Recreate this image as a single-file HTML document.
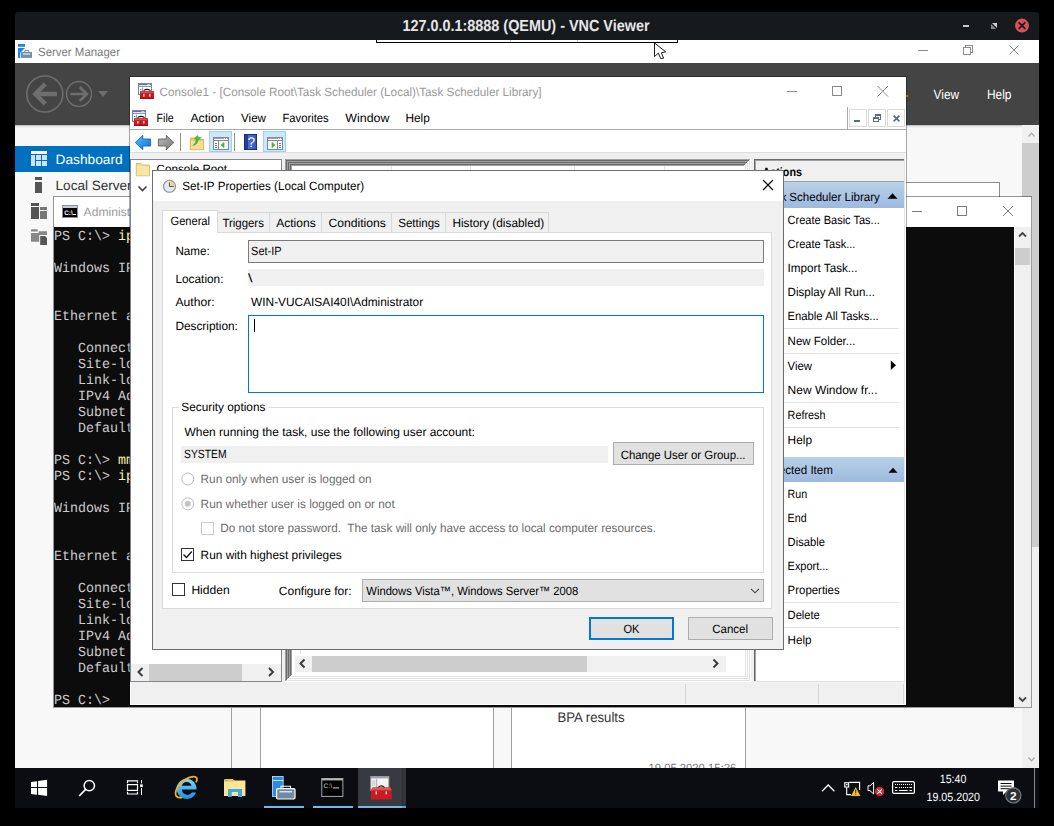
<!DOCTYPE html>
<html><head><meta charset="utf-8"><title>VNC</title>
<style>
html,body{margin:0;padding:0;background:#000;overflow:hidden}
svg{display:block;font-family:"Liberation Sans",sans-serif}
text{white-space:pre}
</style></head><body>
<svg width="1054" height="826" viewBox="0 0 1054 826" shape-rendering="crispEdges" text-rendering="geometricPrecision">
<defs>
<linearGradient id="hdr" x1="0" y1="0" x2="0" y2="1"><stop offset="0" stop-color="#b9d1ea"/><stop offset="1" stop-color="#9db9dc"/></linearGradient>
<linearGradient id="bluearrow" x1="0" y1="0" x2="1" y2="1"><stop offset="0" stop-color="#5cc0ff"/><stop offset="1" stop-color="#0a6fd0"/></linearGradient>
<linearGradient id="grayarrow" x1="0" y1="0" x2="1" y2="1"><stop offset="0" stop-color="#b8b8b8"/><stop offset="1" stop-color="#7c7c7c"/></linearGradient>
<linearGradient id="helpg" x1="0" y1="0" x2="1" y2="0"><stop offset="0" stop-color="#1f3f9a"/><stop offset="0.25" stop-color="#4f72d6"/><stop offset="1" stop-color="#3457b8"/></linearGradient>
<linearGradient id="ieg" x1="0" y1="0" x2="0" y2="1"><stop offset="0" stop-color="#7fd6ff"/><stop offset="1" stop-color="#1b8fe0"/></linearGradient>
<clipPath id="desk"><rect x="15" y="40" width="1024" height="768"/></clipPath>
</defs>
<rect x="0" y="0" width="1054" height="826" fill="#000" />
<path d="M15 40 V15 Q15 12 18 12 H1036 Q1039 12 1039 15 V40 Z" fill="#161a1d" shape-rendering="geometricPrecision"/>
<text x="402.5" y="31" font-size="16" fill="#e6e6e6" font-weight="bold" textLength="247" lengthAdjust="spacingAndGlyphs" >127.0.0.1:8888 (QEMU) - VNC Viewer</text>
<rect x="963" y="25" width="6" height="2" fill="#c9c9c9" />
<path d="M992 23 H997 V28 Z" fill="#d0d0d0" shape-rendering="geometricPrecision"/>
<path d="M991 24 V29 H996 Z" fill="#8a8a8a" shape-rendering="geometricPrecision"/>
<circle cx="1022" cy="25.6" r="7" fill="#d8505a" shape-rendering="geometricPrecision"/>
<path d="M1019.2 22.8 L1024.8 28.4 M1024.8 22.8 L1019.2 28.4" fill="none" stroke="#1b1b1b" stroke-width="1.9" shape-rendering="geometricPrecision" stroke-linecap="round"/>
<g clip-path="url(#desk)">
<rect x="15" y="40" width="1024" height="23" fill="#fff" />
<rect x="15" y="63" width="1024" height="62" fill="#444" />
<rect x="15" y="125" width="1024" height="643" fill="#f8f8f8" />
<rect x="15" y="125" width="1024" height="1" fill="#c4c4c4"/>
<rect x="15" y="126" width="1024" height="1" fill="#e6e6e6"/>
<rect x="15" y="127" width="1024" height="1" fill="#f2f2f2"/>
<rect x="376.5" y="39.5" width="301" height="3" fill="#fff" stroke="#000" stroke-width="1" />
<rect x="376" y="39" width="302" height="1" fill="#161a1d" />
<rect x="510" y="40" width="1" height="2" fill="#ccc"/>
<rect x="577" y="40" width="1" height="2" fill="#ccc"/>
<g shape-rendering="geometricPrecision">
<rect x="18" y="44" width="7" height="2.8" fill="#1e86e0" />
<path d="M18 48 H25 L20.3 52.8 V58 H18 Z" fill="#1e86e0" />
<rect x="21" y="52" width="11" height="5.9" fill="#6e8fae" />
<path d="M24.8 52 V50.6 H28.8 V52" fill="none" stroke="#6e8fae" stroke-width="1" />
<path d="M22.3 53.4 H30.6 L29.8 54.6 H23.1 Z" fill="#fff" />
</g>
<text x="38" y="55.6" font-size="12" fill="#7a7a7a" textLength="82" lengthAdjust="spacingAndGlyphs" >Server Manager</text>
<rect x="918" y="50" width="10" height="1" fill="#8c8c8c"/>
<rect x="963.5" y="47.5" width="7" height="7" fill="none" stroke="#8c8c8c" stroke-width="1" />
<path d="M965.5 47 V45.5 H972.5 V52.5 H971" fill="none" stroke="#8c8c8c" stroke-width="1" />
<path d="M1009.5 45.5 L1018.5 54.5 M1018.5 45.5 L1009.5 54.5" fill="none" stroke="#8c8c8c" stroke-width="1" shape-rendering="geometricPrecision"/>
<g shape-rendering="geometricPrecision" fill="none" stroke="#6e6e6e">
<circle cx="44.8" cy="94" r="18" stroke-width="1.6"/>
<circle cx="79" cy="94" r="12.5" stroke-width="1.4"/>
<path d="M57 94 H36 M45.3 84 L35.3 94 L45.3 104" fill="none" stroke="#6e6e6e" stroke-width="4.4" />
<path d="M70.5 94 H86 M79.8 87 L86.8 94 L79.8 101" fill="none" stroke="#6e6e6e" stroke-width="2.7" />
</g>
<path d="M98 91 H108 L103 97 Z" fill="#6e6e6e" shape-rendering="geometricPrecision"/>
<text x="933.6" y="98.6" font-size="13.5" fill="#fff" textLength="25.5" lengthAdjust="spacingAndGlyphs" >View</text>
<text x="987" y="98.6" font-size="13.5" fill="#fff" textLength="24.5" lengthAdjust="spacingAndGlyphs" >Help</text>
<rect x="906" y="95" width="2" height="2" fill="#e8701a" />
<rect x="15" y="146" width="200" height="26" fill="#0071c1" />
<rect x="31" y="151" width="16" height="3" fill="#fff" />
<rect x="31" y="155" width="4" height="11" fill="#cfe4f4" />
<rect x="36" y="155" width="5" height="5" fill="#cfe4f4" />
<rect x="42" y="155" width="5" height="5" fill="#cfe4f4" />
<rect x="36" y="161" width="5" height="5" fill="#cfe4f4" />
<rect x="42" y="161" width="5" height="5" fill="#cfe4f4" />
<text x="55.6" y="164.3" font-size="13.5" fill="#fff" textLength="67" lengthAdjust="spacingAndGlyphs" >Dashboard</text>
<rect x="35" y="177" width="7" height="3" fill="#555" />
<rect x="35" y="182" width="7" height="11" fill="#555" />
<text x="55.6" y="190.3" font-size="13.5" fill="#333" textLength="76" lengthAdjust="spacingAndGlyphs" >Local Server</text>
<rect x="31" y="203" width="8" height="3" fill="#555" />
<rect x="31" y="207" width="8" height="12" fill="#555" />
<rect x="40" y="207" width="7" height="3" fill="#777" />
<rect x="40" y="211" width="7" height="8" fill="#777" />
<g shape-rendering="geometricPrecision">
<path d="M31 230.2 Q31 229.3 32 229.3 H36.8 Q37.7 229.3 37.7 230.2 V231.6 H31 Z" fill="#888" />
<path d="M31 233 H38.7 V231.3 H47 V241.8 H31 Z" fill="#888" />
<rect x="39.2" y="235" width="8.8" height="10.9" fill="#f8f8f8" />
<path d="M40.2 236 H45 L47 238 V244.9 H40.2 Z" fill="#555" />
</g>
<rect x="231" y="300" width="1" height="480" fill="#a0a0a0"/>
<rect x="260.5" y="300.5" width="233" height="479" fill="#fff" stroke="#a0a0a0" stroke-width="1" />
<rect x="511.5" y="300.5" width="234" height="479" fill="#fff" stroke="#a0a0a0" stroke-width="1" />
<rect x="600.5" y="182.5" width="399" height="299" fill="#fff" stroke="#8c8c8c" stroke-width="1" />
<text x="557.4" y="722" font-size="14" fill="#333" textLength="67.2" lengthAdjust="spacingAndGlyphs" >BPA results</text>
<text x="648.5" y="771.5" font-size="12" fill="#777" textLength="87.7" lengthAdjust="spacingAndGlyphs" >19.05.2020 15:26</text>
<rect x="1022" y="125" width="17" height="643" fill="#f0f0f0" />
<rect x="1022" y="143" width="17" height="404" fill="#cdcdcd" />
<path d="M1028.5 136.5 L1031.5 133.2 L1034.5 136.5" fill="none" stroke="#a8a8a8" stroke-width="1.2" shape-rendering="geometricPrecision"/>
<path d="M1028.5 757.5 L1031.5 760.8 L1034.5 757.5" fill="none" stroke="#a8a8a8" stroke-width="1.2" shape-rendering="geometricPrecision"/>
<rect x="53.5" y="196.5" width="978" height="511" fill="#fff" stroke="rgba(0,0,0,0.4)" stroke-width="1" />
<rect x="54" y="227" width="960" height="480" fill="#0c0c0c" />
<rect x="1015" y="227" width="16" height="480" fill="#f0f0f0" />
<rect x="1015" y="248" width="15" height="17" fill="#cdcdcd" />
<path d="M1019 236.5 L1022.5 233 L1026 236.5" fill="none" stroke="#444" stroke-width="1.8" shape-rendering="geometricPrecision"/>
<path d="M1019 697.5 L1022.5 701 L1026 697.5" fill="none" stroke="#444" stroke-width="1.8" shape-rendering="geometricPrecision"/>
<rect x="62.5" y="205.5" width="15" height="12" fill="#000" stroke="#8a8fa0" stroke-width="1" />
<rect x="63" y="206" width="14" height="2" fill="#c5ccd8" />
<text x="64.2" y="215.2" font-size="6.5" fill="#fff" font-weight="bold" textLength="8.6" lengthAdjust="spacingAndGlyphs" >C:\</text>
<rect x="73.4" y="214.3" width="2.4" height="1" fill="#fff" />
<text x="83.6" y="216" font-size="12" fill="#9a9a9a" textLength="46.6" lengthAdjust="spacingAndGlyphs" >Administ</text>
<rect x="912" y="211" width="10" height="1" fill="#7a7a7a"/>
<rect x="957.5" y="206.5" width="9" height="9" fill="none" stroke="#7a7a7a" stroke-width="1" />
<path d="M1003 206 L1013 216 M1013 206 L1003 216" fill="none" stroke="#7a7a7a" stroke-width="1" shape-rendering="geometricPrecision"/>
<text x="54" y="240" font-size="14" fill="#cccccc" font-family="Liberation Mono" textLength="64" lengthAdjust="spacingAndGlyphs" >PS C:\&gt; </text>
<text x="118" y="240" font-size="14" fill="#f9f1a5" font-family="Liberation Mono" textLength="64" lengthAdjust="spacingAndGlyphs" >ipconfig</text>
<text x="54" y="272" font-size="14" fill="#cccccc" font-family="Liberation Mono" textLength="192" lengthAdjust="spacingAndGlyphs" >Windows IP Configuration</text>
<text x="54" y="320" font-size="14" fill="#cccccc" font-family="Liberation Mono" textLength="208" lengthAdjust="spacingAndGlyphs" >Ethernet adapter Ethernet:</text>
<text x="54" y="352" font-size="14" fill="#cccccc" font-family="Liberation Mono" textLength="304" lengthAdjust="spacingAndGlyphs" >   Connection-specific DNS Suffix  . :</text>
<text x="54" y="368" font-size="14" fill="#cccccc" font-family="Liberation Mono" textLength="304" lengthAdjust="spacingAndGlyphs" >   Site-local IPv6 Address . . . . . :</text>
<text x="54" y="384" font-size="14" fill="#cccccc" font-family="Liberation Mono" textLength="304" lengthAdjust="spacingAndGlyphs" >   Link-local IPv6 Address . . . . . :</text>
<text x="54" y="400" font-size="14" fill="#cccccc" font-family="Liberation Mono" textLength="304" lengthAdjust="spacingAndGlyphs" >   IPv4 Address. . . . . . . . . . . :</text>
<text x="54" y="416" font-size="14" fill="#cccccc" font-family="Liberation Mono" textLength="304" lengthAdjust="spacingAndGlyphs" >   Subnet Mask . . . . . . . . . . . :</text>
<text x="54" y="432" font-size="14" fill="#cccccc" font-family="Liberation Mono" textLength="304" lengthAdjust="spacingAndGlyphs" >   Default Gateway . . . . . . . . . :</text>
<text x="54" y="464" font-size="14" fill="#cccccc" font-family="Liberation Mono" textLength="64" lengthAdjust="spacingAndGlyphs" >PS C:\&gt; </text>
<text x="118" y="464" font-size="14" fill="#f9f1a5" font-family="Liberation Mono" textLength="24" lengthAdjust="spacingAndGlyphs" >mmc</text>
<text x="54" y="480" font-size="14" fill="#cccccc" font-family="Liberation Mono" textLength="64" lengthAdjust="spacingAndGlyphs" >PS C:\&gt; </text>
<text x="118" y="480" font-size="14" fill="#f9f1a5" font-family="Liberation Mono" textLength="64" lengthAdjust="spacingAndGlyphs" >ipconfig</text>
<text x="54" y="512" font-size="14" fill="#cccccc" font-family="Liberation Mono" textLength="192" lengthAdjust="spacingAndGlyphs" >Windows IP Configuration</text>
<text x="54" y="560" font-size="14" fill="#cccccc" font-family="Liberation Mono" textLength="208" lengthAdjust="spacingAndGlyphs" >Ethernet adapter Ethernet:</text>
<text x="54" y="592" font-size="14" fill="#cccccc" font-family="Liberation Mono" textLength="304" lengthAdjust="spacingAndGlyphs" >   Connection-specific DNS Suffix  . :</text>
<text x="54" y="608" font-size="14" fill="#cccccc" font-family="Liberation Mono" textLength="304" lengthAdjust="spacingAndGlyphs" >   Site-local IPv6 Address . . . . . :</text>
<text x="54" y="624" font-size="14" fill="#cccccc" font-family="Liberation Mono" textLength="304" lengthAdjust="spacingAndGlyphs" >   Link-local IPv6 Address . . . . . :</text>
<text x="54" y="640" font-size="14" fill="#cccccc" font-family="Liberation Mono" textLength="304" lengthAdjust="spacingAndGlyphs" >   IPv4 Address. . . . . . . . . . . :</text>
<text x="54" y="656" font-size="14" fill="#cccccc" font-family="Liberation Mono" textLength="304" lengthAdjust="spacingAndGlyphs" >   Subnet Mask . . . . . . . . . . . :</text>
<text x="54" y="672" font-size="14" fill="#cccccc" font-family="Liberation Mono" textLength="304" lengthAdjust="spacingAndGlyphs" >   Default Gateway . . . . . . . . . :</text>
<text x="54" y="704" font-size="14" fill="#cccccc" font-family="Liberation Mono" textLength="56" lengthAdjust="spacingAndGlyphs" >PS C:\&gt;</text>
<rect x="129.5" y="76.5" width="777" height="629" fill="none" stroke="rgba(0,0,0,0.33)" stroke-width="1" />
<rect x="130" y="77" width="776" height="628" fill="#fff" />
<rect x="131" y="153" width="774" height="551" fill="#f0f0f0" />
<rect x="130" y="77" width="776" height="53" fill="#fff" />
<rect x="130" y="130" width="776" height="22" fill="#fff" />
<g transform="translate(138,83)"><g shape-rendering="geometricPrecision"><rect x="0.5" y="0.5" width="13" height="11" fill="#fff" stroke="#7e879c"/><rect x="1" y="1" width="12" height="1.2" fill="#67749a"/><rect x="9.6" y="1" width="1" height="1.2" fill="#fff"/><rect x="11.4" y="1" width="0.6" height="1.2" fill="#fff"/><rect x="1" y="3" width="12" height="1" fill="#8e98b4"/><rect x="4.2" y="4.5" width="0.9" height="6.5" fill="#7e879c"/><rect x="2" y="6" width="1.4" height="1" fill="#777"/><path d="M5.6 7.6 Q9 5.2 12.6 7.6" fill="none" stroke="#111" stroke-width="1.1"/><rect x="2" y="8" width="14" height="8" rx="0.8" fill="#c8181e"/><rect x="2.6" y="8.3" width="12.8" height="2" fill="#d94a4a"/><rect x="2" y="14.8" width="14" height="1.2" fill="#a80d12"/><rect x="5" y="11" width="1.6" height="2.6" fill="#b9d6d8"/><rect x="11" y="11" width="1.6" height="2.6" fill="#b9d6d8"/></g></g>
<text x="159.6" y="96.2" font-size="12" fill="#999" textLength="382" lengthAdjust="spacingAndGlyphs" >Console1 - [Console Root\Task Scheduler (Local)\Task Scheduler Library]</text>
<rect x="787" y="91" width="10" height="1" fill="#8a8a8a"/>
<rect x="832.5" y="86.5" width="9" height="9" fill="none" stroke="#8a8a8a" stroke-width="1" />
<path d="M877.5 86 L888 96.5 M888 86 L877.5 96.5" fill="none" stroke="#8a8a8a" stroke-width="1" shape-rendering="geometricPrecision"/>
<g transform="translate(132,110)"><g shape-rendering="geometricPrecision"><rect x="0.5" y="0.5" width="13" height="11" fill="#fff" stroke="#7e879c"/><rect x="1" y="1" width="12" height="1.2" fill="#67749a"/><rect x="9.6" y="1" width="1" height="1.2" fill="#fff"/><rect x="11.4" y="1" width="0.6" height="1.2" fill="#fff"/><rect x="1" y="3" width="12" height="1" fill="#8e98b4"/><rect x="4.2" y="4.5" width="0.9" height="6.5" fill="#7e879c"/><rect x="2" y="6" width="1.4" height="1" fill="#777"/><path d="M5.6 7.6 Q9 5.2 12.6 7.6" fill="none" stroke="#111" stroke-width="1.1"/><rect x="2" y="8" width="14" height="8" rx="0.8" fill="#c8181e"/><rect x="2.6" y="8.3" width="12.8" height="2" fill="#d94a4a"/><rect x="2" y="14.8" width="14" height="1.2" fill="#a80d12"/><rect x="5" y="11" width="1.6" height="2.6" fill="#b9d6d8"/><rect x="11" y="11" width="1.6" height="2.6" fill="#b9d6d8"/></g></g>
<text x="156.6" y="122" font-size="12" fill="#000" textLength="17.2" lengthAdjust="spacingAndGlyphs" >File</text>
<text x="190.4" y="122" font-size="12" fill="#000" textLength="34" lengthAdjust="spacingAndGlyphs" >Action</text>
<text x="241" y="122" font-size="12" fill="#000" textLength="25" lengthAdjust="spacingAndGlyphs" >View</text>
<text x="282.4" y="122" font-size="12" fill="#000" textLength="46.3" lengthAdjust="spacingAndGlyphs" >Favorites</text>
<text x="345.3" y="122" font-size="12" fill="#000" textLength="44.1" lengthAdjust="spacingAndGlyphs" >Window</text>
<text x="405.4" y="122" font-size="12" fill="#000" textLength="24.4" lengthAdjust="spacingAndGlyphs" >Help</text>
<rect x="130" y="129" width="776" height="1" fill="#a9a9a9"/>
<rect x="847" y="107" width="1" height="23" fill="#a9a9a9"/>
<rect x="849.5" y="109.5" width="17" height="17" fill="#fff" stroke="#dadada" stroke-width="1" />
<rect x="868.5" y="109.5" width="17" height="17" fill="#fff" stroke="#dadada" stroke-width="1" />
<rect x="887.5" y="109.5" width="17" height="17" fill="#fff" stroke="#dadada" stroke-width="1" />
<rect x="854" y="120" width="6" height="2" fill="#5b6c82" />
<rect x="873.5" y="117.5" width="5" height="4" fill="none" stroke="#5b6c82" stroke-width="1" />
<rect x="873" y="118" width="6" height="1" fill="#5b6c82"/>
<path d="M875.5 117 V114.5 H880.5 V119.5 H879" fill="none" stroke="#5b6c82" stroke-width="1" />
<rect x="875" y="115" width="6" height="1" fill="#5b6c82"/>
<path d="M893.6 115.6 L899.4 121.4 M899.4 115.6 L893.6 121.4" fill="none" stroke="#5b6c82" stroke-width="1.7" shape-rendering="geometricPrecision"/>
<rect x="130" y="152" width="776" height="1" fill="#dcdcdc"/>
<g shape-rendering="geometricPrecision">
<path d="M135.3 142.5 L142.8 135.4 V139 H150.6 V146 H142.8 V149.7 Z" fill="url(#bluearrow)" stroke="#1565b5" stroke-width="0.9" stroke-linejoin="round"/>
<path d="M173.8 142.5 L166.3 135.4 V139 H158.4 V146 H166.3 V149.7 Z" fill="url(#grayarrow)" stroke="#5e5e5e" stroke-width="0.9" stroke-linejoin="round"/>
</g>
<rect x="180" y="133" width="1" height="18" fill="#8e8e8e"/>
<g shape-rendering="geometricPrecision">
<path d="M190.3 138 H195 L196.5 139.5 H203.7 V149.7 H190.3 Z" fill="#eccb74" stroke="#c9a74e" stroke-width="0.8" />
<rect x="190.8" y="141" width="12.4" height="8.3" fill="#f5dc98" />
<path d="M193 145.5 Q196 143 196.5 139 L194.3 139 L197.3 135.4 L200.3 139 L198.3 139 Q198 144.5 193 145.5 Z" fill="#4cc23a" stroke="#2f9a25" stroke-width="0.5" />
<rect x="199" y="137.3" width="2.5" height="1" fill="#4a90e2" />
</g>
<rect x="209.5" y="131.5" width="22" height="20" fill="#cce8ff" stroke="#99d1ff" stroke-width="1" />
<g transform="translate(213,137)"><g shape-rendering="crispEdges"><rect x="0.5" y="0.5" width="15" height="12" fill="#fff" stroke="#888"/><rect x="1" y="1" width="14" height="1" fill="#9aa0ad"/><rect x="11" y="1" width="1" height="1" fill="#fff"/><rect x="13" y="1" width="1" height="1" fill="#fff"/><rect x="1" y="3" width="14" height="1" fill="#888"/><rect x="5" y="4" width="1" height="8" fill="#888"/><rect x="2" y="5.5" width="2" height="1" fill="#3f86d6"/><rect x="2" y="7.5" width="2" height="1" fill="#3f86d6"/><rect x="2" y="9.5" width="2" height="1" fill="#3f86d6"/><rect x="6" y="4" width="9" height="8" fill="#f4f4f4"/><path d="M11 5.5 L8 8 L11 10.5 Z" fill="#4cc23a" stroke="#2f9a25" stroke-width="0.5" shape-rendering="geometricPrecision"/></g></g>
<rect x="234" y="133" width="1" height="18" fill="#8e8e8e"/>
<rect x="244.5" y="134.5" width="12" height="15" fill="url(#helpg)" stroke="#1a2f7a" stroke-width="1" />
<rect x="245" y="135" width="3" height="14" fill="#1f3f9a" />
<text x="247.6" y="147.4" font-size="14" fill="#fff" textLength="7.6" lengthAdjust="spacingAndGlyphs" >?</text>
<rect x="263.5" y="131.5" width="22" height="20" fill="#cce8ff" stroke="#99d1ff" stroke-width="1" />
<g transform="translate(267,137)"><g shape-rendering="crispEdges"><rect x="0.5" y="0.5" width="15" height="12" fill="#fff" stroke="#888"/><rect x="1" y="1" width="14" height="1" fill="#9aa0ad"/><rect x="11" y="1" width="1" height="1" fill="#fff"/><rect x="13" y="1" width="1" height="1" fill="#fff"/><rect x="1" y="3" width="14" height="1" fill="#888"/><rect x="10" y="4" width="1" height="8" fill="#888"/><rect x="12" y="5.5" width="2" height="1" fill="#3f86d6"/><rect x="12" y="7.5" width="2" height="1" fill="#3f86d6"/><rect x="12" y="9.5" width="2" height="1" fill="#3f86d6"/><rect x="1" y="4" width="9" height="8" fill="#f4f4f4"/><path d="M5 5.5 L8 8 L5 10.5 Z" fill="#4cc23a" stroke="#2f9a25" stroke-width="0.5" shape-rendering="geometricPrecision"/></g></g>
<rect x="130.5" y="159.5" width="151" height="522" fill="#fff" stroke="#828790" stroke-width="1" />
<g shape-rendering="geometricPrecision">
<path d="M136.3 163.5 H141 L142.5 165 H149.5 V175.8 H136.3 Z" fill="#f3d98c" stroke="#d1b25a" stroke-width="0.8" />
<rect x="136.8" y="166.2" width="12.2" height="9.2" fill="#f8e5a8" />
</g>
<text x="156.6" y="172.8" font-size="12" fill="#000" textLength="70.3" lengthAdjust="spacingAndGlyphs" >Console Root</text>
<path d="M138.5 186.5 L142.5 190.5 L146.5 186.5" fill="none" stroke="#404040" stroke-width="1.6" shape-rendering="geometricPrecision"/>
<rect x="131" y="664" width="150" height="17" fill="#f0f0f0" />
<rect x="149" y="664" width="93" height="17" fill="#cdcdcd" />
<path d="M142.5 668 L138.5 672 L142.5 676" fill="none" stroke="#3c3c3c" stroke-width="2" shape-rendering="geometricPrecision"/>
<path d="M269 668 L273 672 L269 676" fill="none" stroke="#3c3c3c" stroke-width="2" shape-rendering="geometricPrecision"/>
<rect x="285" y="159" width="466" height="523" fill="#fff" />
<rect x="285" y="159" width="466" height="1" fill="#a0a0a0"/>
<rect x="285" y="159" width="1" height="523" fill="#a0a0a0"/>
<rect x="285" y="681" width="466" height="1" fill="#fff"/>
<rect x="750" y="159" width="1" height="523" fill="#fff"/>
<rect x="286" y="160" width="464" height="1" fill="#696969"/>
<rect x="286" y="160" width="1" height="521" fill="#696969"/>
<rect x="286" y="680" width="464" height="1" fill="#e3e3e3"/>
<rect x="749" y="160" width="1" height="521" fill="#e3e3e3"/>
<rect x="287" y="161" width="462" height="1" fill="#a0a0a0"/>
<rect x="287" y="161" width="1" height="519" fill="#a0a0a0"/>
<rect x="287" y="679" width="462" height="1" fill="#fff"/>
<rect x="748" y="161" width="1" height="519" fill="#fff"/>
<rect x="288" y="162" width="460" height="1" fill="#696969"/>
<rect x="288" y="162" width="1" height="517" fill="#696969"/>
<rect x="288" y="678" width="460" height="1" fill="#e3e3e3"/>
<rect x="747" y="162" width="1" height="517" fill="#e3e3e3"/>
<rect x="289" y="163" width="458" height="1" fill="#a0a0a0"/>
<rect x="289" y="163" width="1" height="515" fill="#a0a0a0"/>
<rect x="289" y="677" width="458" height="1" fill="#fff"/>
<rect x="746" y="163" width="1" height="515" fill="#fff"/>
<rect x="290" y="164" width="456" height="1" fill="#696969"/>
<rect x="290" y="164" width="1" height="513" fill="#696969"/>
<rect x="290" y="676" width="456" height="1" fill="#e3e3e3"/>
<rect x="745" y="164" width="1" height="513" fill="#e3e3e3"/>
<rect x="291" y="165" width="454" height="1" fill="#a0a0a0"/>
<rect x="291" y="165" width="1" height="511" fill="#a0a0a0"/>
<rect x="291" y="675" width="454" height="1" fill="#fff"/>
<rect x="744" y="165" width="1" height="511" fill="#fff"/>
<rect x="391" y="166" width="1" height="4" fill="#e5e5e5"/>
<rect x="470" y="166" width="1" height="4" fill="#e5e5e5"/>
<rect x="574" y="166" width="1" height="4" fill="#e5e5e5"/>
<rect x="664" y="166" width="1" height="4" fill="#e5e5e5"/>
<rect x="300" y="650" width="1" height="4" fill="#e5e5e5"/>
<rect x="295" y="656" width="431" height="16" fill="#f0f0f0" />
<rect x="312" y="656" width="275" height="16" fill="#cdcdcd" />
<path d="M304.5 659.5 L300.5 663.5 L304.5 667.5" fill="none" stroke="#3c3c3c" stroke-width="2" shape-rendering="geometricPrecision"/>
<path d="M713.5 659.5 L717.5 663.5 L713.5 667.5" fill="none" stroke="#3c3c3c" stroke-width="2" shape-rendering="geometricPrecision"/>
<rect x="754" y="159" width="151" height="523" fill="#fff" />
<rect x="754" y="159" width="151" height="1" fill="#696969"/>
<rect x="754" y="160" width="151" height="1" fill="#a0a0a0"/>
<rect x="754" y="159" width="1" height="523" fill="#696969"/>
<rect x="755" y="160" width="1" height="522" fill="#a0a0a0"/>
<rect x="904" y="159" width="1" height="523" fill="#e3e3e3"/>
<rect x="754" y="681" width="151" height="1" fill="#e3e3e3"/>
<rect x="756" y="161" width="148" height="20" fill="#f0f0f0" />
<text x="762.4" y="175.7" font-size="12" fill="#000" font-weight="bold" textLength="39.6" lengthAdjust="spacingAndGlyphs" >Actions</text>
<rect x="756" y="181" width="148" height="1" fill="#a0a0a0"/>
<rect x="756" y="182" width="148" height="26" fill="url(#hdr)" />
<text x="789.3" y="200.6" font-size="12" fill="#000" textLength="90.6" lengthAdjust="spacingAndGlyphs" >Scheduler Library</text>
<text x="763.5" y="200.6" font-size="12" fill="#000" textLength="23" lengthAdjust="spacingAndGlyphs" >Task</text>
<path d="M887.5 198.8 L892.5 193.2 L897.5 198.8 Z" fill="#000" shape-rendering="geometricPrecision"/>
<text x="787.6" y="224.3" font-size="12" fill="#000" textLength="92.2" lengthAdjust="spacingAndGlyphs" >Create Basic Tas...</text>
<text x="787.6" y="248.3" font-size="12" fill="#000" textLength="67.8" lengthAdjust="spacingAndGlyphs" >Create Task...</text>
<text x="787.6" y="272.3" font-size="12" fill="#000" textLength="70" lengthAdjust="spacingAndGlyphs" >Import Task...</text>
<text x="787.6" y="296.3" font-size="12" fill="#000" textLength="87.4" lengthAdjust="spacingAndGlyphs" >Display All Run...</text>
<text x="787.6" y="320.3" font-size="12" fill="#000" textLength="91.1" lengthAdjust="spacingAndGlyphs" >Enable All Tasks...</text>
<text x="787.6" y="345.3" font-size="12" fill="#000" textLength="67.8" lengthAdjust="spacingAndGlyphs" >New Folder...</text>
<text x="787.6" y="370.3" font-size="12" fill="#000" textLength="24.4" lengthAdjust="spacingAndGlyphs" >View</text>
<text x="787.6" y="394.3" font-size="12" fill="#000" textLength="89.9" lengthAdjust="spacingAndGlyphs" >New Window fr...</text>
<text x="787.6" y="419.3" font-size="12" fill="#000" textLength="37.9" lengthAdjust="spacingAndGlyphs" >Refresh</text>
<text x="787.6" y="444.3" font-size="12" fill="#000" textLength="24.4" lengthAdjust="spacingAndGlyphs" >Help</text>
<rect x="784" y="328" width="115" height="1" fill="#e2e2e2"/>
<rect x="784" y="353" width="115" height="1" fill="#e2e2e2"/>
<rect x="784" y="402" width="115" height="1" fill="#e2e2e2"/>
<rect x="784" y="427" width="115" height="1" fill="#e2e2e2"/>
<path d="M890.8 360.5 L896 365.3 L890.8 370 Z" fill="#000" shape-rendering="geometricPrecision"/>
<rect x="756" y="457" width="148" height="25" fill="url(#hdr)" />
<text x="810.4" y="473.6" font-size="12" fill="#000" textLength="22.6" lengthAdjust="spacingAndGlyphs" >Item</text>
<text x="762" y="473.6" font-size="12" fill="#000" textLength="45.2" lengthAdjust="spacingAndGlyphs" >Selected</text>
<path d="M888.5 472.8 L893 467.8 L897.5 472.8 Z" fill="#000" shape-rendering="geometricPrecision"/>
<text x="787.6" y="498.2" font-size="12" fill="#000" textLength="19.6" lengthAdjust="spacingAndGlyphs" >Run</text>
<text x="787.6" y="522.2" font-size="12" fill="#000" textLength="19" lengthAdjust="spacingAndGlyphs" >End</text>
<text x="787.6" y="546.2" font-size="12" fill="#000" textLength="37.3" lengthAdjust="spacingAndGlyphs" >Disable</text>
<text x="787.6" y="570.2" font-size="12" fill="#000" textLength="40.7" lengthAdjust="spacingAndGlyphs" >Export...</text>
<text x="787.6" y="594.2" font-size="12" fill="#000" textLength="52.1" lengthAdjust="spacingAndGlyphs" >Properties</text>
<text x="787.6" y="619.2" font-size="12" fill="#000" textLength="32.2" lengthAdjust="spacingAndGlyphs" >Delete</text>
<text x="787.6" y="644.2" font-size="12" fill="#000" textLength="24" lengthAdjust="spacingAndGlyphs" >Help</text>
<rect x="784" y="602" width="115" height="1" fill="#e2e2e2"/>
<rect x="784" y="627" width="115" height="1" fill="#e2e2e2"/>
<rect x="131" y="682" width="774" height="22" fill="#f0f0f0" />
<rect x="685" y="684" width="1" height="20" fill="#d8d8d8"/>
<rect x="818" y="684" width="1" height="20" fill="#d8d8d8"/>
<rect x="903" y="684" width="1" height="20" fill="#d8d8d8"/>
<rect x="152.5" y="170.5" width="631" height="479" fill="#f0f0f0" stroke="#6e6e6e" stroke-width="1" />
<rect x="153" y="171" width="630" height="30" fill="#fff" />
<g shape-rendering="geometricPrecision">
<circle cx="169.5" cy="186.3" r="6" fill="#e3eaf0" stroke="#8d8d8d" stroke-width="1.1"/>
<path d="M169.5 186.3 V181.2 A5.1 5.1 0 0 1 174.6 186.3 Z" fill="#f3d488" />
<path d="M169.4 182.4 V186.5 H173.8" fill="none" stroke="#4a5a6a" stroke-width="1" />
</g>
<text x="182.2" y="190.2" font-size="12" fill="#000" textLength="182" lengthAdjust="spacingAndGlyphs" >Set-IP Properties (Local Computer)</text>
<path d="M763 180 L773 190 M773 180 L763 190" fill="none" stroke="#000" stroke-width="1.1" shape-rendering="geometricPrecision"/>
<rect x="217.5" y="212.5" width="52" height="20" fill="#f0f0f0" stroke="#d9d9d9" stroke-width="1" />
<text x="222.4" y="227" font-size="12" fill="#000" textLength="41.5" lengthAdjust="spacingAndGlyphs" >Triggers</text>
<rect x="269.5" y="212.5" width="52" height="20" fill="#f0f0f0" stroke="#d9d9d9" stroke-width="1" />
<text x="276.2" y="227" font-size="12" fill="#000" textLength="39.5" lengthAdjust="spacingAndGlyphs" >Actions</text>
<rect x="321.5" y="212.5" width="70" height="20" fill="#f0f0f0" stroke="#d9d9d9" stroke-width="1" />
<text x="328.4" y="227" font-size="12" fill="#000" textLength="57.4" lengthAdjust="spacingAndGlyphs" >Conditions</text>
<rect x="391.5" y="212.5" width="54" height="20" fill="#f0f0f0" stroke="#d9d9d9" stroke-width="1" />
<text x="398.2" y="227" font-size="12" fill="#000" textLength="41.7" lengthAdjust="spacingAndGlyphs" >Settings</text>
<rect x="445.5" y="212.5" width="103" height="20" fill="#f0f0f0" stroke="#d9d9d9" stroke-width="1" />
<text x="452.4" y="227" font-size="12" fill="#000" textLength="91.8" lengthAdjust="spacingAndGlyphs" >History (disabled)</text>
<rect x="162.5" y="232.5" width="609" height="376" fill="#fff" stroke="#d9d9d9" stroke-width="1" />
<rect x="162.5" y="210.5" width="55" height="22" fill="#fff" stroke="#d9d9d9" stroke-width="1" />
<rect x="163" y="231" width="54" height="3" fill="#fff" />
<text x="170.6" y="225" font-size="12" fill="#000" textLength="39.4" lengthAdjust="spacingAndGlyphs" >General</text>
<text x="175.4" y="254.7" font-size="12" fill="#000" textLength="34.3" lengthAdjust="spacingAndGlyphs" >Name:</text>
<rect x="248.5" y="240.5" width="515" height="22" fill="#f0f0f0" stroke="#7a7a7a" stroke-width="1" />
<text x="251.1" y="254.7" font-size="12" fill="#000" textLength="30.4" lengthAdjust="spacingAndGlyphs" >Set-IP</text>
<text x="175.4" y="283" font-size="12" fill="#000" textLength="48.1" lengthAdjust="spacingAndGlyphs" >Location:</text>
<rect x="248" y="269" width="516" height="17" fill="#f0f0f0" />
<text x="248" y="281.8" font-size="12" fill="#000" textLength="4.5" lengthAdjust="spacingAndGlyphs" >\</text>
<text x="175.4" y="306" font-size="12" fill="#000" textLength="39.2" lengthAdjust="spacingAndGlyphs" >Author:</text>
<text x="251.1" y="306" font-size="12" fill="#000" textLength="172" lengthAdjust="spacingAndGlyphs" >WIN-VUCAISAI40I\Administrator</text>
<text x="175.4" y="330" font-size="12" fill="#000" textLength="62.5" lengthAdjust="spacingAndGlyphs" >Description:</text>
<rect x="248.5" y="315.5" width="515" height="77" fill="#fff" stroke="#0078d7" stroke-width="1" />
<rect x="254" y="319" width="1" height="13" fill="#000"/>
<rect x="172.5" y="407.5" width="591" height="165" fill="#fff" stroke="#dcdcdc" stroke-width="1" />
<rect x="179" y="400" width="89" height="14" fill="#fff" />
<text x="181.3" y="411" font-size="12" fill="#000" textLength="84.1" lengthAdjust="spacingAndGlyphs" >Security options</text>
<text x="184.5" y="436" font-size="12" fill="#000" textLength="290.4" lengthAdjust="spacingAndGlyphs" >When running the task, use the following user account:</text>
<rect x="181" y="446" width="427" height="17" fill="#f0f0f0" />
<text x="184" y="457.8" font-size="12" fill="#000" textLength="42.5" lengthAdjust="spacingAndGlyphs" >SYSTEM</text>
<rect x="613.5" y="442.5" width="140" height="22" fill="#e1e1e1" stroke="#adadad" stroke-width="1" />
<text x="620.7" y="458.5" font-size="12" fill="#000" textLength="124.8" lengthAdjust="spacingAndGlyphs" >Change User or Group...</text>
<g shape-rendering="geometricPrecision">
<circle cx="187.8" cy="479" r="6" fill="#fff" stroke="#bcbcbc" stroke-width="1"/>
<circle cx="187.8" cy="503.8" r="6" fill="#fff" stroke="#bcbcbc" stroke-width="1"/>
<circle cx="187.8" cy="503.8" r="3" fill="#c4c4c4"/>
</g>
<text x="200.6" y="482.7" font-size="12" fill="#6d6d6d" textLength="170.9" lengthAdjust="spacingAndGlyphs" >Run only when user is logged on</text>
<text x="200.6" y="507.6" font-size="12" fill="#6d6d6d" textLength="194.1" lengthAdjust="spacingAndGlyphs" >Run whether user is logged on or not</text>
<rect x="201.5" y="522.5" width="12" height="12" fill="#fff" stroke="#cccccc" stroke-width="1" />
<text x="220.3" y="532.3" font-size="12" fill="#6d6d6d" textLength="435.7" lengthAdjust="spacingAndGlyphs" >Do not store password.  The task will only have access to local computer resources.</text>
<rect x="181.5" y="548.5" width="12" height="12" fill="#fff" stroke="#333" stroke-width="1" />
<path d="M183.5 554.5 L186.5 557.5 L191.8 551.5" fill="none" stroke="#111" stroke-width="1.3" shape-rendering="geometricPrecision"/>
<text x="200.6" y="558.9" font-size="12" fill="#000" textLength="141.1" lengthAdjust="spacingAndGlyphs" >Run with highest privileges</text>
<rect x="172.5" y="583.5" width="12" height="12" fill="#fff" stroke="#333" stroke-width="1" />
<text x="191.4" y="593.6" font-size="12" fill="#000" textLength="38.3" lengthAdjust="spacingAndGlyphs" >Hidden</text>
<text x="278.8" y="594.6" font-size="12" fill="#000" textLength="72.7" lengthAdjust="spacingAndGlyphs" >Configure for:</text>
<rect x="362.5" y="579.5" width="401" height="22" fill="#e1e1e1" stroke="#adadad" stroke-width="1" />
<text x="366.3" y="594.5" font-size="12" fill="#000" textLength="211.9" lengthAdjust="spacingAndGlyphs" >Windows Vista™, Windows Server™ 2008</text>
<path d="M751 588.8 L755 592.8 L759 588.8" fill="none" stroke="#444" stroke-width="1.1" shape-rendering="geometricPrecision"/>
<rect x="590.0" y="618.0" width="83" height="21" fill="#e1e1e1" stroke="#0078d7" stroke-width="2" />
<text x="623.4" y="632.8" font-size="12" fill="#000" textLength="16" lengthAdjust="spacingAndGlyphs" >OK</text>
<rect x="688.5" y="617.5" width="84" height="22" fill="#e1e1e1" stroke="#adadad" stroke-width="1" />
<text x="712.2" y="632.8" font-size="12" fill="#000" textLength="35.8" lengthAdjust="spacingAndGlyphs" >Cancel</text>
<rect x="15" y="768" width="1024" height="40" fill="#0b0d13" />
<g shape-rendering="geometricPrecision">
<path d="M31 782.1 L37 781.3 V787 H31 Z M38.1 781.1 L47.1 779.8 V787 H38.1 Z M31 788.1 H37 V794.7 L31 793.9 Z M38.1 788.1 H47.1 V796 L38.1 794.8 Z" fill="#fff" />
<circle cx="89.3" cy="785.6" r="5.2" fill="none" stroke="#fff" stroke-width="1.5"/>
<path d="M85.6 789.4 L79.2 796" fill="none" stroke="#fff" stroke-width="1.7" />
<path d="M127.5 783.2 V780.9 H137.5 V783.2 M127.5 791.8 V794 H137.5 V791.8" fill="none" stroke="#fff" stroke-width="1.2" />
<rect x="127.5" y="784.6" width="10.0" height="5.8" fill="none" stroke="#fff" stroke-width="1.2" />
<rect x="141" y="780" width="1" height="3.4" fill="#fff" />
<rect x="140.2" y="784.3" width="2.6" height="2.8" fill="#fff" />
<rect x="141" y="788" width="1" height="7" fill="#fff" />
<path d="M196.6 789.5 H181.8 A5.6 5.6 0 0 0 192 792.4 L196 792.4 A10 10 0 1 1 196.6 789.5 Z M181.9 785.8 H191.6 A5 5 0 0 0 181.9 785.8 Z" fill="url(#ieg)" />
<path d="M181.5 797.6 Q174 798.2 176 790.5 Q178.6 781.5 189 777.6 Q195.8 775.4 196.9 778.4 Q197.3 780 196.2 781.8" fill="none" stroke="#f3b514" stroke-width="1.7" stroke-linecap="round"/>
<path d="M224 780.5 Q224 779 225.5 779 H232.5 L234 780.5 H245.4 V796 H224 Z" fill="#ffe591" />
<path d="M224 780.5 Q224 779 225.5 779 H232.5 L234 780.5 L233 781.8 H224 Z" fill="#f2c445" />
<rect x="225.5" y="779.8" width="1.5" height="0.9" fill="#3aa9e8" />
<path d="M228 789 H242 V797 H238 V792 H231.7 V797 H228 Z" fill="#3aa9e8" />
<rect x="272.35" y="776.35" width="10.8" height="20.3" fill="#2a8be2" stroke="#e8f3fc" stroke-width="0.7" />
<rect x="272" y="780" width="11.5" height="1" fill="#bfe0fa"/>
<rect x="276.6" y="788.6" width="18.400000000000002" height="10.4" fill="#6d8ba3" stroke="#fff" stroke-width="1.2" rx="1.2" />
<path d="M281 788 V786.3 H290.5 V788" fill="none" stroke="#fff" stroke-width="1.1" />
<path d="M279.5 791.8 H292" fill="none" stroke="#fff" stroke-width="1.1" />
<rect x="321.75" y="778.55" width="21.099999999999998" height="17.9" fill="#000" stroke="#9a9a9a" stroke-width="1.1" />
<rect x="322" y="778.6" width="20.6" height="1.8" fill="#b8b8b8" />
<text x="323.6" y="788" font-size="6.5" fill="#c8c8c8" textLength="8.5" lengthAdjust="spacingAndGlyphs" >C:\</text>
<rect x="333" y="787.4" width="6" height="1" fill="#d8d8d8" />
</g>
<rect x="264" y="806" width="40" height="2" fill="#76b9ed" />
<rect x="313" y="806" width="40" height="2" fill="#76b9ed" />
<rect x="358" y="768" width="44" height="40" fill="#373a40" />
<rect x="402" y="768" width="1" height="40" fill="#2a2c31" />
<rect x="403" y="768" width="3" height="40" fill="#33363b" />
<rect x="358" y="806" width="44" height="2" fill="#76b9ed" />
<rect x="402" y="806" width="4" height="2" fill="#5f9fd4" />
<g shape-rendering="geometricPrecision">
<rect x="370.75" y="776.45" width="18.1" height="14.1" fill="#f4f4f4" stroke="#9a9a9a" stroke-width="0.9" />
<rect x="371" y="776.7" width="17.6" height="1.7" fill="#9aa0ad" />
<rect x="372" y="780.2" width="3.4" height="6" fill="#d4d8de" />
<rect x="376.2" y="779" width="1" height="11" fill="#aaa"/>
<path d="M377.5 788.4 Q381 783.6 385 788.2" fill="none" stroke="#222" stroke-width="1.3" />
<path d="M371 790.5 L372.5 787.4 H390.5 L391.6 790.2 V798.4 Q391.6 799.6 390.4 799.6 H372.2 Q371 799.6 371 798.4 Z" fill="#cb1b21" />
<path d="M372.5 787.4 H390.5 L391.6 790.2 H371 Z" fill="#e05252" />
<rect x="375.6" y="791.4" width="1.4" height="3" fill="#d9dcdc" />
<rect x="385.6" y="791.4" width="1.4" height="3" fill="#d9dcdc" />
</g>
<g shape-rendering="geometricPrecision">
<path d="M822 791.2 L828.2 785 L834.4 791.2" fill="none" stroke="#fff" stroke-width="1.3" />
<rect x="844.75" y="782.75" width="3.9" height="4.300000000000001" fill="none" stroke="#fff" stroke-width="1.1" />
<path d="M849.2 782.4 H859.6 V790 M846.7 787.6 V794.6 H851 M846 784.6 H847.6" fill="none" stroke="#fff" stroke-width="1.1" />
<path d="M855.7 787 L860.4 796 H851 Z" fill="#fcc212" />
<rect x="855.2" y="789.6" width="1" height="3.4" fill="#222" />
<rect x="855.2" y="793.8" width="1" height="1" fill="#222" />
<path d="M868 785.8 H870 L873.6 782.4 V794 L870 790.6 H868 Z" fill="none" stroke="#fff" stroke-width="1" />
<circle cx="879.6" cy="791.5" r="4.7" fill="#e0212f"/>
<path d="M877.4 789.3 L881.8 793.7 M881.8 789.3 L877.4 793.7" fill="none" stroke="#fff" stroke-width="1.2" />
<rect x="892.6" y="781.6" width="21.8" height="11.8" fill="none" stroke="#fff" stroke-width="1.2" rx="1.4" />
<rect x="895" y="784" width="1" height="1" fill="#fff" />
<rect x="897" y="784" width="1" height="1" fill="#fff" />
<rect x="899" y="784" width="1" height="1" fill="#fff" />
<rect x="901" y="784" width="1" height="1" fill="#fff" />
<rect x="903" y="784" width="1" height="1" fill="#fff" />
<rect x="905" y="784" width="1" height="1" fill="#fff" />
<rect x="907" y="784" width="1" height="1" fill="#fff" />
<rect x="909" y="784" width="1" height="1" fill="#fff" />
<rect x="911" y="784" width="1" height="1" fill="#fff" />
<rect x="895" y="787" width="2.4" height="1" fill="#fff" />
<rect x="899" y="787" width="1" height="1" fill="#fff" />
<rect x="901" y="787" width="1" height="1" fill="#fff" />
<rect x="903" y="787" width="1" height="1" fill="#fff" />
<rect x="905" y="787" width="1" height="1" fill="#fff" />
<rect x="907" y="787" width="1" height="1" fill="#fff" />
<rect x="909.4" y="787" width="2.6" height="1" fill="#fff" />
<rect x="895" y="790" width="2.4" height="1" fill="#fff" />
<rect x="899" y="790" width="8.6" height="1" fill="#fff" />
<rect x="909.4" y="790" width="2.6" height="1" fill="#fff" />
<path d="M998 780.5 H1014 V791.5 H1006.5 L1003 795 V791.5 H998 Z" fill="#fff" />
<rect x="1000.5" y="783" width="11.0" height="1" fill="#0b0d13"/>
<rect x="1000.5" y="785.6" width="11.0" height="1" fill="#0b0d13"/>
<rect x="1000.5" y="788.2" width="11.0" height="1" fill="#0b0d13"/>
<circle cx="1013.3" cy="795.4" r="7.6" fill="#2d2f33" stroke="#777" stroke-width="1.2"/>
</g>
<text x="1010" y="799.6" font-size="11.5" fill="#fff" font-weight="bold" textLength="6.6" lengthAdjust="spacingAndGlyphs" >2</text>
<text x="939.8" y="783" font-size="12" fill="#fff" textLength="26.5" lengthAdjust="spacingAndGlyphs" >15:40</text>
<text x="926.5" y="800.5" font-size="12" fill="#fff" textLength="53.5" lengthAdjust="spacingAndGlyphs" >19.05.2020</text>
<rect x="1034" y="768" width="1" height="40" fill="#8a8a8a"/>
</g>
<path d="M654.5 43 V56.6 L658.3 53.2 L660.7 58.6 L663.6 58.2 L661.4 52.8 L665.6 51.8 Z" fill="#fff" stroke="#000" stroke-width="0.9" shape-rendering="geometricPrecision" stroke-linejoin="round"/>
</svg></body></html>
